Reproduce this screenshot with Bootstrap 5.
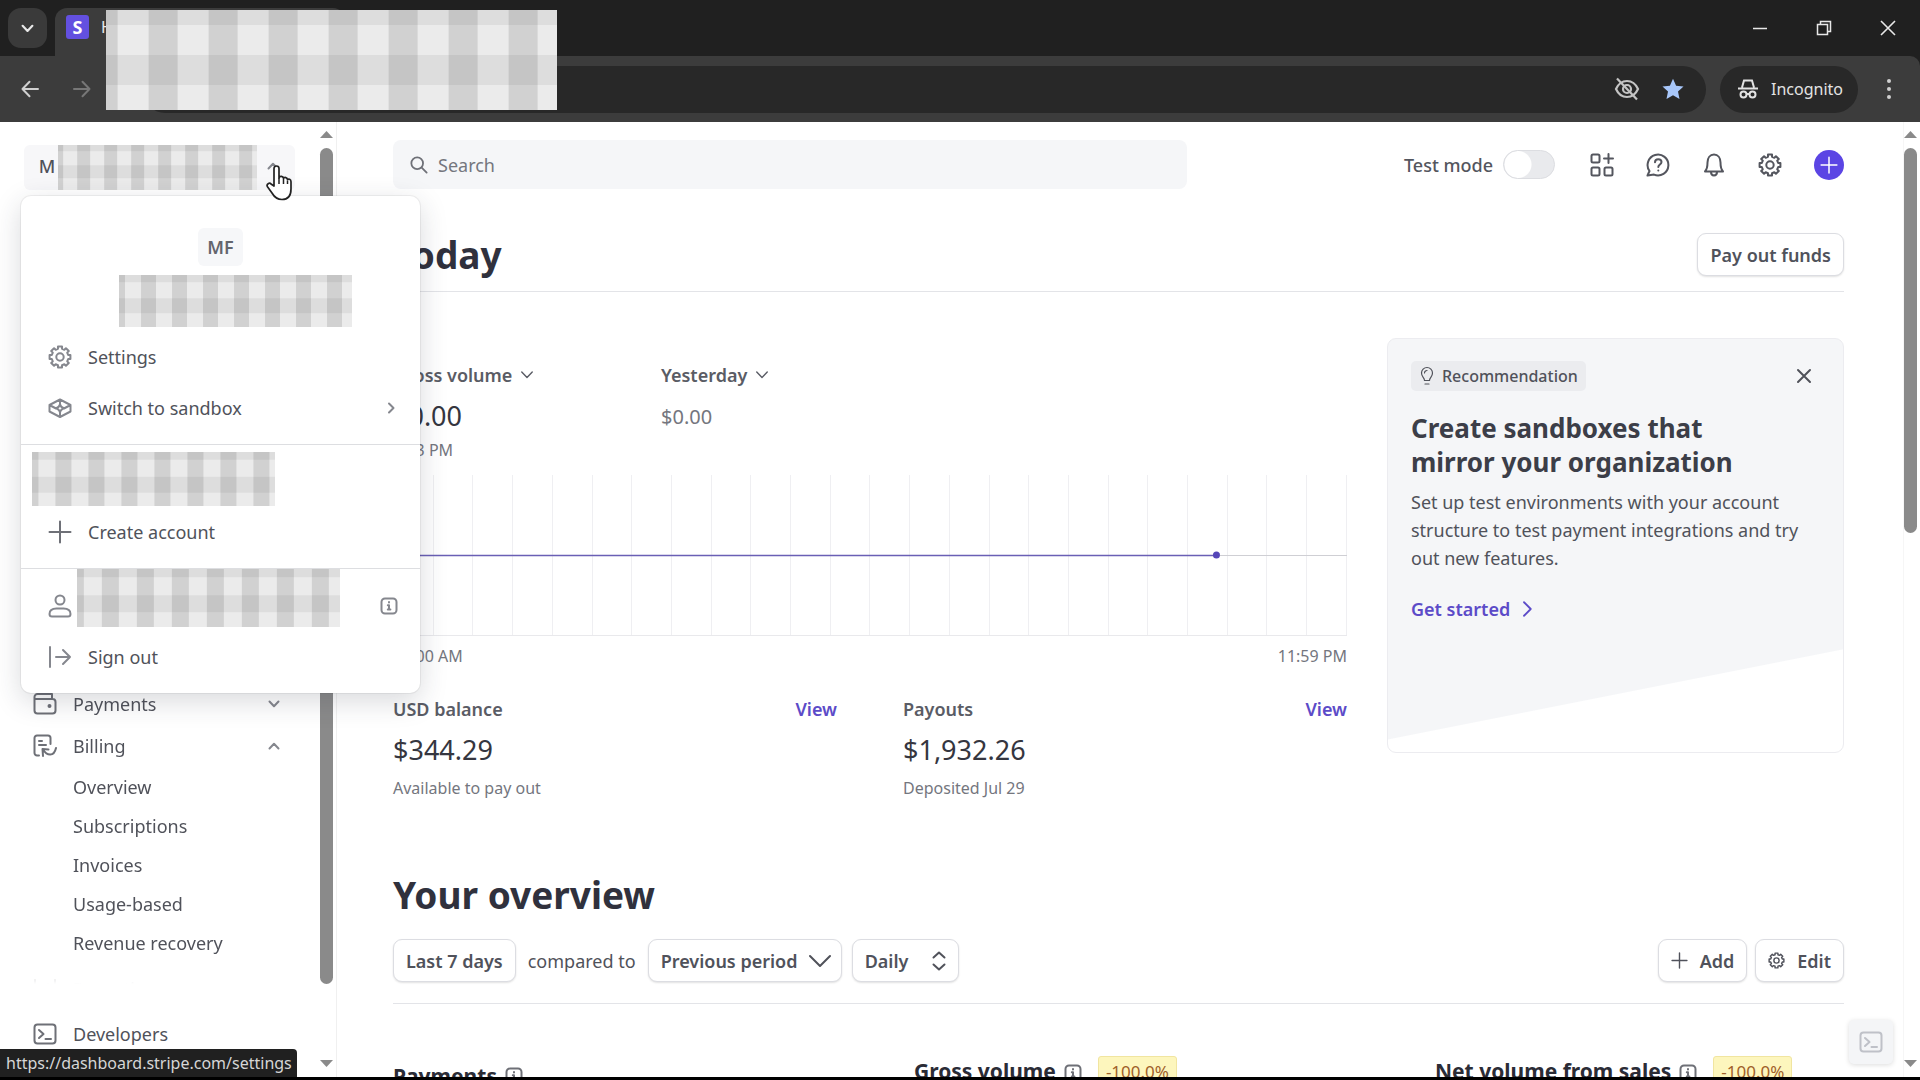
<!DOCTYPE html>
<html lang="en">
<head>
<meta charset="utf-8">
<meta name="viewport" content="width=device-width, initial-scale=1">
<title>Home – Stripe dashboard</title>
<link href="https://cdn.jsdelivr.net/npm/bootstrap@5.3.0/dist/css/bootstrap.min.css" rel="stylesheet">
<style>
:root{--ink:#30313d;--text:#50525a;--muted:#74767e;--line:#e3e4e8;--accent:#5c4bc8}
body{font-family:"Noto Sans","Open Sans",sans-serif;font-size:18px;line-height:26px;color:var(--text);background:#fff}
svg{display:block;flex:none}
.ico{fill:none;stroke:currentColor;stroke-width:2;stroke-linecap:round;stroke-linejoin:round}
.thin{stroke-width:1.2}
.dim{color:#6e7077}
.soft{color:#85878e}
button{color:inherit;font:inherit}
.bare{background:none;border:0;padding:0}
.shell{height:100vh;overflow:hidden;border-bottom:3px solid #000}
.workarea{min-height:0}

/* browser window */
.strip{height:56px;background:#202020;color:#e8e8e8}
.tabmenu{width:39px;height:40px;border-radius:13px;background:#3a3a3a}
.tabcur{width:290px;height:48px;background:#3c3c3c;border-radius:12px 12px 0 0;font-size:16px;padding:0 0 10px 11px}
.favi{width:23px;height:24px;border-radius:3px;background:#6350e0;color:#fff;font-size:18px;font-weight:700;line-height:24px;text-align:center}
.winbtn{width:64px;height:56px}
.tools{height:66px;background:#3c3c3c;color:#d0d0d0;border-radius:0 10px 0 0}
.toolswrap{background:#202020}
.fwd{color:#777}
.omni{height:47px;border-radius:24px;background:#282828;padding-right:22px;gap:22px;margin-left:50px}
.incog{height:47px;border-radius:24px;background:#282828;padding:0 0 0 17px;font-size:16px;color:#e3e3e3;width:138px;margin-left:14px}
.redact{--t:60px;background-color:#ebebeb;background-image:linear-gradient(90deg,rgba(0,0,0,.11) 49%,transparent 49%),linear-gradient(rgba(0,0,0,.06) 50%,transparent 50%);background-size:var(--t) var(--t);background-position:calc(var(--t)*-.29) calc(var(--t)*-.25)}
.redact-tab{left:106px;top:10px;width:451px;height:100px;z-index:5}

/* sidebar */
.side{width:337px;flex:none}
.sidebody{padding-top:23px}
.acct{height:45px;margin-left:24px;width:271px;background:#f7f7f9;border-radius:6px;padding:0 16px 4px 12px}
.acct b{width:22px;font-weight:500}
.acct .redact{--t:27px;width:199px;height:45px;margin-bottom:-4px}
.sidenav{padding:493px 24px 0 33px;height:802px;overflow:hidden;-webkit-mask-image:linear-gradient(#000 calc(100% - 22px),transparent 99%);mask-image:linear-gradient(#000 calc(100% - 22px),transparent 99%)}
.sideitem{height:42px;color:var(--text);text-decoration:none;gap:16px}
.sideitem .ms-auto{margin-right:16px}
.sidesub{height:39px;padding-left:40px;color:var(--text);text-decoration:none}
.faded{opacity:.3;margin-top:6px}
.devs{padding:21px 24px 0 33px}
.bar{width:17px;flex:none;color:#8a8a8a;padding:9px 0 10px}
.bar i{width:13px;border-radius:7px;background:#8a8a8a;margin-top:10px}
.bar-side{border-right:1px solid #f0f0f0}
.bar-side i{flex:0 0 836px}
.bar-page{border-left:1px solid #f6f6f6}
.bar-page i{flex:0 0 385px}

/* account menu */
.acctmenu{left:21px;top:74px;width:399px;z-index:10;background:#fff;border-radius:10px;box-shadow:0 0 0 1px rgba(0,0,0,.05),0 8px 28px rgba(40,44,60,.18)}
.mf{width:45px;height:38px;margin-top:32px;border-radius:6px;background:#f6f7f9;font-weight:600;color:#63656d}
.menurow{height:51px;padding:0 23px 0 27px;gap:16px;color:var(--text);text-decoration:none}
.sect{padding-bottom:11px}
.sect+.sect{border-top:1px solid #dddee1}
.redact-name{--t:31px;width:233px;height:52px;margin:9px 0 4px 98px}
.redact-org{--t:33px;width:243px;height:54px;margin:7px 0 0 11px}
.redact-user{--t:35px;width:264px;height:58px}
.userrow{height:62px;padding:0 22px 0 27px}
.userrow .redact{margin:0 40px 4px 5px}
.userrow svg{margin-top:12px}
.pointer{left:265px;top:42px;z-index:20}
.statusurl{left:0;bottom:0;z-index:9;background:#202020;color:#d6d6d6;font-size:16px;line-height:28px;padding:0 5px 0 6px;border-radius:0 4px 0 0}

/* page */
.page{padding:18px 59px 0 56px;min-width:0}
.searchbox{flex:0 1 794px;height:49px;background:#f5f6f8;border-radius:8px;padding-left:17px}
.searchbox input{border:0;background:none;outline:0;color:var(--text);width:100%}
.searchbox input::placeholder{color:#74767e;opacity:1}
.toptools{gap:32px;color:#54565e}
.testmode{gap:10px;margin-right:3px;font-weight:500}
.form-check-input.tgl{width:52px;height:29px;margin:0;border:1px solid #dcdde1;background-color:#e9eaed;border-radius:15px;background-image:radial-gradient(circle at 14px 50%,#fff 13px,transparent 14px)!important;background-size:100% 100%;background-position:0 0}
.addbtn{width:30px;height:30px;border-radius:50%;background:#5b45e4;color:#fff}
.h-big{font-size:37px;line-height:48px;font-weight:700;color:var(--ink)}
.headrow{margin-top:44px;padding-bottom:15px;border-bottom:1px solid var(--line)}
.headrow .h-big{line-height:43px}
.btn-box{height:43px;border:1px solid #dcdde2;border-radius:9px;background:#fff;box-shadow:0 1px 2px rgba(0,0,0,.12);font-weight:600;color:#50525b;padding:0 12px;white-space:nowrap}
.gx40{--bs-gutter-x:40px}
.gx66{--bs-gutter-x:66px}
.gx112{--bs-gutter-x:112px}
.today{margin-top:46px}
.volcol{width:268px}
.lab{font-weight:600;color:#5a5c65}
.money{font-size:27px;line-height:36px;color:#35363f;margin-top:10px}
.money-sub{font-size:20px;line-height:38px;color:var(--muted)}
.note{font-size:16px;line-height:24px;color:var(--muted)}
.stamp{margin-top:4px}
.plot{height:161px;margin-top:13px;border-bottom:1px solid #e9e9ec;border-left:1px solid #efeff2}
.plot>i{flex:1;border-right:1px solid #efeff2}
.plot svg{left:0;top:0;width:100%;height:100%;overflow:visible}
.lnk{color:var(--accent);text-decoration:none;font-weight:600}
.bal{margin-top:28px}
.reco{min-height:415px;border:1px solid #ececf0;border-radius:9px;padding:22px 23px;overflow:hidden;background:linear-gradient(168.8deg,#f5f6f8 79.5%,transparent 79.7%)}
.recotag{height:30px;padding:0 8px 0 9px;font-size:16px;background:#ebecef;border-radius:5px;font-weight:500;gap:8px}
.reco h2{font-size:26px;line-height:34px;font-weight:700;color:#3c3e48;max-width:350px;margin:20px 0 9px}
.reco p{line-height:28px;margin:0 0 24px}
.over{margin-top:71px}
.filters{margin-top:20px;padding-bottom:21px;border-bottom:1px solid var(--line)}
.selbox{position:relative}
.selbox select{appearance:none;width:100%}
.selbox svg{position:absolute;right:11px;top:50%;transform:translateY(-50%);pointer-events:none}
.sel-prev{width:194px}
.sel-day{width:107px;margin-left:10px}
.tiles{margin-top:52px;color:#2b2c36;font-weight:700;font-size:21px;line-height:30px;white-space:nowrap}
.tiles .first{padding-top:5px}
.pct{background:#fdf6bd;border:1px solid #f1e5a0;border-radius:3px;color:#a0602a;font-size:17px;font-weight:400;padding:0 7px;margin-left:16px}
.devbtn{right:27px;bottom:13px;width:44px;height:44px;background:#f4f5f7;border-radius:5px;color:#bfc1c8;box-shadow:0 1px 5px rgba(0,0,0,.14)}
</style>
<script src="https://cdn.jsdelivr.net/npm/bootstrap@5.3.0/dist/js/bootstrap.bundle.min.js"></script>
</head>
<body>
<svg width="0" height="0" class="position-absolute" aria-hidden="true">
  <symbol id="gear" viewBox="0 0 24 24"><path d="M9.97 3.85 9.98 1.59 14.02 1.59 14.03 3.85 16.33 4.8 17.93 3.21 20.79 6.07 19.2 7.67 20.15 9.97 22.41 9.98 22.41 14.02 20.15 14.03 19.2 16.33 20.79 17.93 17.93 20.79 16.33 19.2 14.03 20.15 14.02 22.41 9.98 22.41 9.97 20.15 7.67 19.2 6.07 20.79 3.21 17.93 4.8 16.33 3.85 14.03 1.59 14.02 1.59 9.98 3.85 9.97 4.8 7.67 3.21 6.07 6.07 3.21 7.67 4.8Z"/><circle cx="12" cy="12" r="3.7"/></symbol>
  <symbol id="term" viewBox="0 0 24 24"><rect x="1.5" y="2.5" width="21" height="19" rx="3"/><path d="m6 8 4.500 4L6 16M12.500 17H18"/></symbol>
  <symbol id="info" viewBox="0 0 18 18"><rect x="1.500" y="1.500" width="15" height="15" rx="3.500"/><path d="M9 5v.4M7.800 8.300H9v4M7.800 12.600h2.600"/></symbol>
  <symbol id="down" viewBox="0 0 12 12"><path d="m1.500 3.500 4.500 4.700 4.500-4.700"/></symbol>
  <symbol id="up" viewBox="0 0 12 12"><path d="m1.500 8.500 4.500-4.700 4.500 4.700"/></symbol>
  <symbol id="right" viewBox="0 0 12 12"><path d="m4 1.500 4.500 4.500L4 10.500"/></symbol>
  <symbol id="plus" viewBox="0 0 24 24"><path d="M12 1.500v21M1.500 12h21"/></symbol>
</svg>

<div class="shell d-flex flex-column position-relative">
  <header class="position-relative">
    <div class="strip d-flex">
      <button class="bare tabmenu ms-2 mt-2 d-flex align-items-center justify-content-center" aria-label="Search tabs"><svg class="ico" width="13" height="13"><use href="#down"/></svg></button>
      <div class="tabcur ms-2 mt-2 d-flex align-items-center gap-2">
        <span class="favi">S</span><span class="ps-1">Home</span>
      </div>
      <div class="ms-auto d-flex">
        <button class="bare winbtn d-flex align-items-center justify-content-center" aria-label="Minimize"><svg width="16" height="16"><path d="M1 8.500h14" stroke="currentColor" stroke-width="1.500"/></svg></button>
        <button class="bare winbtn d-flex align-items-center justify-content-center" aria-label="Restore"><svg width="16" height="16" fill="none" stroke="currentColor" stroke-width="1.500"><path d="M1.500 4.500h10v10h-10zM4.500 4V1.500h10v10H12"/></svg></button>
        <button class="bare winbtn d-flex align-items-center justify-content-center" aria-label="Close"><svg width="16" height="16" stroke="currentColor" stroke-width="1.600"><path d="m1 1 14 14M15 1 1 15"/></svg></button>
      </div>
    </div>
    <div class="toolswrap">
      <div class="tools d-flex align-items-center">
        <button class="bare ms-3 ps-1" aria-label="Back"><svg class="ico" width="20" height="18" viewBox="0 0 20 18"><path d="M18 9H2.500M9.500 1.800 2.500 9l7 7.200"/></svg></button>
        <button class="bare fwd ms-4 ps-2" aria-label="Forward"><svg class="ico" width="20" height="18" viewBox="0 0 20 18"><path d="M2 9h15.500M10.500 1.800l7 7.200-7 7.200"/></svg></button>
        <div class="omni flex-fill d-flex align-items-center justify-content-end">
          <svg width="26" height="24" viewBox="0 0 26 24" fill="none" stroke="#c4c4c4" stroke-width="2.200"><path d="M2 12c2.500-5.500 6.500-8 11-8s8.500 2.500 11 8c-2.500 5.500-6.500 8-11 8S4.500 17.500 2 12Z"/><circle cx="13" cy="12" r="4"/><path d="m3 1.500 20 21"/></svg>
          <svg width="22" height="22" viewBox="0 0 22 22" fill="#a8c7fa"><path d="m11 .8 3.100 6.900 7.400.8-5.500 5.100 1.500 7.400L11 17.200 4.500 21 6 13.600.5 8.500l7.400-.8z"/></svg>
        </div>
        <div class="incog d-flex align-items-center">
          <svg width="22" height="20" viewBox="0 0 22 20" fill="none" stroke="currentColor" stroke-width="2"><path d="M5 8.500 7 1.500h8l2 7M1 9.500h20"/><circle cx="6.500" cy="15.500" r="3"/><circle cx="15.500" cy="15.500" r="3"/><path d="M9.500 15h3"/></svg>
          <span class="ps-2 ms-1">Incognito</span>
        </div>
        <button class="bare ms-4 me-4 ps-1 pe-1" aria-label="Menu"><svg width="6" height="22" viewBox="0 0 6 22" fill="currentColor"><circle cx="3" cy="3" r="2"/><circle cx="3" cy="11" r="2"/><circle cx="3" cy="19" r="2"/></svg></button>
      </div>
    </div>
    <div class="redact redact-tab position-absolute"></div>
  </header>

  <div class="workarea d-flex flex-fill position-relative">
    <aside class="side d-flex">
      <div class="sidebody flex-fill d-flex flex-column">
        <button class="bare acct d-flex align-items-center flex-shrink-0">
          <b>M</b><span class="redact"></span>
          <svg class="ico soft ms-auto" width="12" height="12"><use href="#up"/></svg>
        </button>
        <nav class="sidenav flex-shrink-0">
          <a href="#" class="sideitem d-flex align-items-center"><svg class="ico dim" width="24" height="24" viewBox="0 0 24 24"><path d="M1.500 8.500V5a3 3 0 0 1 3-3H19v4M1.500 7h18a3 3 0 0 1 3 3v8.500a3 3 0 0 1-3 3h-15a3 3 0 0 1-3-3Z"/><circle cx="16.500" cy="14" r="1"/></svg><span>Payments</span><svg class="ico soft ms-auto" width="12" height="12"><use href="#down"/></svg></a>
          <a href="#" class="sideitem d-flex align-items-center"><svg class="ico dim" width="24" height="24" viewBox="0 0 24 24"><path d="M6 21.500H4a2.500 2.500 0 0 1-2.500-2.500V4A2.500 2.500 0 0 1 4 1.500h11A2.500 2.500 0 0 1 17.500 4v6M6 7h3M6 11h7M10 22l-.5-7 6 .5M10 15.500c4 6.500 11 7.500 13-1.500"/></svg><span>Billing</span><svg class="ico soft ms-auto" width="12" height="12"><use href="#up"/></svg></a>
          <a href="#" class="sidesub d-flex align-items-center">Overview</a>
          <a href="#" class="sidesub d-flex align-items-center">Subscriptions</a>
          <a href="#" class="sidesub d-flex align-items-center">Invoices</a>
          <a href="#" class="sidesub d-flex align-items-center">Usage-based</a>
          <a href="#" class="sidesub d-flex align-items-center">Revenue recovery</a>
          <a href="#" class="sideitem faded d-flex align-items-center"><svg class="ico" width="24" height="24" viewBox="0 0 24 24"><path d="M2 3v18M8 9v12M15 7v14M22 3v18"/></svg><span>Reporting</span></a>
        </nav>
        <div class="devs"><a href="#" class="sideitem d-flex align-items-center"><svg class="ico dim" width="24" height="24"><use href="#term"/></svg><span>Developers</span></a></div>
      </div>
      <div class="bar bar-side d-flex flex-column align-items-start">
        <svg width="13" height="7"><path d="M0 7 6.500 0 13 7z" fill="currentColor"/></svg><i></i>
        <svg class="mt-auto" width="13" height="7"><path d="m0 0 6.500 7L13 0z" fill="currentColor"/></svg>
      </div>
    </aside>

    <div class="acctmenu position-absolute">
      <div class="sect">
        <div class="d-flex justify-content-center"><span class="mf d-flex align-items-center justify-content-center">MF</span></div>
        <div class="redact redact-name"></div>
        <a href="#" class="menurow d-flex align-items-center"><svg class="ico soft" width="24" height="24"><use href="#gear"/></svg>Settings</a>
        <a href="#" class="menurow d-flex align-items-center"><svg class="ico soft" width="24" height="24" viewBox="0 0 24 24"><path d="M12 3.500 22.500 9v6.500L12 21 1.500 15.500V9ZM1.500 9 8 12.500M22.500 9 16 12.500M12 3.500V8M12 21v-4.500M12 8c.5 2.800 1.500 3.800 4.500 4.300-3 .5-4 1.500-4.500 4.300-.5-2.800-1.500-3.800-4.500-4.300 3-.5 4-1.500 4.500-4.300Z"/></svg>Switch to sandbox<svg class="ico soft ms-auto" width="12" height="12"><use href="#right"/></svg></a>
      </div>
      <div class="sect">
        <div class="redact redact-org"></div>
        <a href="#" class="menurow d-flex align-items-center"><svg class="ico dim" width="24" height="24"><use href="#plus"/></svg>Create account</a>
      </div>
      <div class="sect">
        <div class="userrow d-flex align-items-center">
          <svg class="ico soft" width="24" height="24" viewBox="0 0 24 24"><circle cx="12" cy="6" r="4.500"/><path d="M1.500 20c0-4 3.500-5.500 7-5.500h7c3.500 0 7 1.500 7 5.500 0 1.500-1 2.500-2.500 2.500H4c-1.500 0-2.500-1-2.500-2.500Z"/></svg>
          <span class="redact redact-user"></span>
          <svg class="ico soft" width="18" height="18"><use href="#info"/></svg>
        </div>
        <a href="#" class="menurow d-flex align-items-center"><svg class="ico soft" width="24" height="24" viewBox="0 0 24 24"><path d="M2 2v20M8 12h14M15 5l7 7-7 7"/></svg>Sign out</a>
      </div>
    </div>

    <svg class="pointer position-absolute" width="28" height="37" viewBox="0 0 28 37"><path d="M9 22V4.500a2.500 2.500 0 0 1 5 0V14c.5-2.300 4.300-2 4.500.5.800-1.700 3.900-1.200 4 1.200 1-1.200 3.500-.4 3.500 2V25c0 7-3 10.500-9 10.500-5.500 0-8-3-10-6.500L2.300 22.500C1.200 20 4.500 18.300 6 20Z" fill="#fff" stroke="#222" stroke-width="1.700" stroke-linejoin="round"/><path d="M14 14v6M18.500 15v5M22.500 16.500V20" stroke="#222" stroke-width="1.500"/></svg>

    <main class="page flex-fill">
      <div class="d-flex align-items-center">
        <label class="searchbox d-flex align-items-center gap-2"><svg class="ico dim" width="18" height="18" viewBox="0 0 20 20"><circle cx="8" cy="8" r="6.500"/><path d="m13 13 5.500 5.500"/></svg><input type="search" placeholder="Search" aria-label="Search"></label>
        <div class="toptools ms-auto d-flex align-items-center">
          <div class="testmode form-switch p-0 d-flex align-items-center"><label for="tm">Test mode</label><input id="tm" class="form-check-input tgl float-none" type="checkbox" role="switch"></div>
          <button class="bare" aria-label="Apps"><svg class="ico" width="24" height="24" viewBox="0 0 24 24"><rect x="1.500" y="1.500" width="8" height="8" rx="1.500"/><rect x="1.500" y="14.500" width="8" height="8" rx="1.500"/><rect x="14.500" y="14.500" width="8" height="8" rx="1.500"/><path d="M18.500 1v9M14 5.500h9"/></svg></button>
          <button class="bare" aria-label="Help"><svg class="ico" width="24" height="24" viewBox="0 0 24 24"><path d="M1.500 22.500 3.500 18A10.400 10.400 0 1 1 8 21.600ZM9 9.300c0-4.300 6.500-4 6.500-.3 0 2.500-3.200 2.400-3.200 5M12.300 17.400v.2"/></svg></button>
          <button class="bare" aria-label="Notifications"><svg class="ico" width="24" height="24" viewBox="0 0 24 24"><path d="M3 18.500c1.800-2 2.500-4 2.500-9 0-4.500 2.500-8 6.500-8s6.500 3.500 6.500 8c0 5 .7 7 2.500 9ZM9 19c0 4.600 6 4.600 6 0"/></svg></button>
          <button class="bare" aria-label="Settings"><svg class="ico" width="24" height="24"><use href="#gear"/></svg></button>
          <button class="bare addbtn d-flex align-items-center justify-content-center" aria-label="Create"><svg class="ico" width="18" height="18"><use href="#plus"/></svg></button>
        </div>
      </div>

      <div class="headrow d-flex align-items-center justify-content-between">
        <h1 class="h-big m-0">Today</h1>
        <button class="btn-box">Pay out funds</button>
      </div>

      <div class="row gx40 today">
        <div class="col-8 pt-4">
          <div class="d-flex">
            <div class="volcol">
              <button class="bare lab d-flex align-items-center gap-2">Gross volume <svg class="ico thin" width="14" height="14"><use href="#down"/></svg></button>
              <div class="money">$0.00</div>
              <div class="note stamp">6:43 PM</div>
            </div>
            <div>
              <button class="bare lab d-flex align-items-center gap-2">Yesterday <svg class="ico thin" width="14" height="14"><use href="#down"/></svg></button>
              <div class="money money-sub">$0.00</div>
            </div>
          </div>
          <div class="plot d-flex position-relative">
            <i></i><i></i><i></i><i></i><i></i><i></i><i></i><i></i><i></i><i></i><i></i><i></i><i></i><i></i><i></i><i></i><i></i><i></i><i></i><i></i><i></i><i></i><i></i><i></i>
            <svg class="position-absolute"><line x1="86.3%" x2="100%" y1="80.500" y2="80.500" stroke="#cfcfd4"/><line x1="0" x2="86.3%" y1="80.500" y2="80.500" stroke="#6a5fb5" stroke-width="1.600"/><circle cx="86.3%" cy="80" r="3.500" fill="#5546b8"/></svg>
          </div>
          <div class="note d-flex justify-content-between mt-2"><span>12:00 AM</span><span>11:59 PM</span></div>
          <div class="row gx66 bal">
            <div class="col-6"><div class="lab d-flex justify-content-between">USD balance<a href="#" class="lnk">View</a></div><div class="money">$344.29</div><div class="note mt-2">Available to pay out</div></div>
            <div class="col-6"><div class="lab d-flex justify-content-between">Payouts<a href="#" class="lnk">View</a></div><div class="money">$1,932.26</div><div class="note mt-2">Deposited Jul 29</div></div>
          </div>
        </div>
        <div class="col-4">
          <section class="reco">
            <div class="d-flex justify-content-between align-items-center">
              <span class="recotag d-flex align-items-center"><svg class="ico thin" width="14" height="20" viewBox="0 0 14 20"><path d="M4.500 14.500C4.500 11.500 1.500 11 1.500 7a5.500 5.500 0 0 1 11 0c0 4-3 4.500-3 7.500ZM5 18h4M4.500 7A2.500 2.500 0 0 1 7 4.500"/></svg>Recommendation</span>
              <button class="bare me-2" aria-label="Dismiss"><svg class="ico" width="16" height="16" viewBox="0 0 16 16"><path d="m2 2 12 12M14 2 2 14"/></svg></button>
            </div>
            <h2>Create sandboxes that mirror your organization</h2>
            <p>Set up test environments with your account structure to test payment integrations and try out new features.</p>
            <a href="#" class="lnk d-inline-flex align-items-center gap-2">Get started <svg class="ico thin" width="18" height="18"><use href="#right"/></svg></a>
          </section>
        </div>
      </div>

      <h2 class="h-big mb-0 over">Your overview</h2>
      <div class="filters d-flex align-items-center">
        <button class="btn-box">Last 7 days</button>
        <label for="cmp" class="mx-2 px-1">compared to</label>
        <div class="selbox sel-prev"><select id="cmp" class="btn-box"><option>Previous period</option></select><svg class="ico" width="22" height="22" viewBox="0 0 22 22"><path d="m1 6 10 10L21 6"/></svg></div>
        <div class="selbox sel-day"><select class="btn-box" aria-label="Interval"><option>Daily</option></select><svg class="ico" width="18" height="20" viewBox="0 0 18 20"><path d="m3.500 6.500 5.500-5 5.500 5M3.500 13.500l5.500 5 5.500-5"/></svg></div>
        <div class="ms-auto d-flex gap-2">
          <button class="btn-box d-flex align-items-center gap-2"><svg class="ico me-1" width="17" height="17"><use href="#plus"/></svg>Add</button>
          <button class="btn-box d-flex align-items-center gap-2"><svg class="ico me-1" width="17" height="17"><use href="#gear"/></svg>Edit</button>
        </div>
      </div>

      <div class="row gx112 tiles">
        <div class="col-4 first d-flex align-items-center gap-2">Payments<svg class="ico dim" width="18" height="18"><use href="#info"/></svg></div>
        <div class="col-4 d-flex align-items-start"><span class="me-2">Gross volume</span><svg class="ico dim mt-2" width="18" height="18"><use href="#info"/></svg><span class="pct">-100.0%</span></div>
        <div class="col-4 d-flex align-items-start"><span class="me-2">Net volume from sales</span><svg class="ico dim mt-2" width="18" height="18"><use href="#info"/></svg><span class="pct">-100.0%</span></div>
      </div>
    </main>

    <div class="bar bar-page d-flex flex-column align-items-start">
      <svg width="13" height="7"><path d="M0 7 6.500 0 13 7z" fill="currentColor"/></svg><i></i>
      <svg class="mt-auto" width="13" height="7"><path d="m0 0 6.500 7L13 0z" fill="currentColor"/></svg>
    </div>
    <button class="bare devbtn position-absolute d-flex align-items-center justify-content-center" aria-label="Workbench"><svg class="ico" width="24" height="24"><use href="#term"/></svg></button>
  </div>
  <div class="statusurl position-absolute">https://dashboard.stripe.com/settings</div>
</div>
</body>
</html>
